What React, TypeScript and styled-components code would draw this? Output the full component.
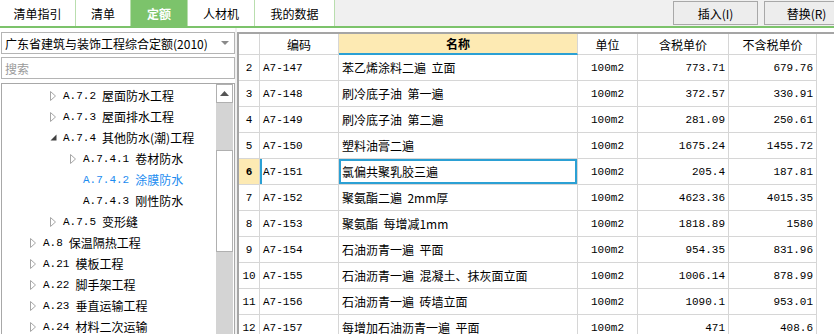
import React from "react";
import styled, { createGlobalStyle } from "styled-components";

type TreeNode = {
    level: number;
    code: string;
    name: string;
    state: "open" | "closed" | "leaf";
    selected?: boolean;
};

type Quota = {
    no: number;
    code: string;
    name: string;
    unit: string;
    taxed: string;
    untaxed: string;
};

const tabs = [
    { label: "清单指引", width: 76 },
    { label: "清单", width: 55 },
    { label: "定额", width: 57, active: true },
    { label: "人材机", width: 67 },
    { label: "我的数据", width: 80 },
];

const tree: TreeNode[] = [
    { level: 2, code: "A.7.2", name: "屋面防水工程", state: "closed" },
    { level: 2, code: "A.7.3", name: "屋面排水工程", state: "closed" },
    { level: 2, code: "A.7.4", name: "其他防水(潮)工程", state: "open" },
    { level: 3, code: "A.7.4.1", name: "卷材防水", state: "closed" },
    { level: 3, code: "A.7.4.2", name: "涂膜防水", state: "leaf", selected: true },
    { level: 3, code: "A.7.4.3", name: "刚性防水", state: "leaf" },
    { level: 2, code: "A.7.5", name: "变形缝", state: "closed" },
    { level: 1, code: "A.8", name: "保温隔热工程", state: "closed" },
    { level: 1, code: "A.21", name: "模板工程", state: "closed" },
    { level: 1, code: "A.22", name: "脚手架工程", state: "closed" },
    { level: 1, code: "A.23", name: "垂直运输工程", state: "closed" },
    { level: 1, code: "A.24", name: "材料二次运输", state: "closed" },
];

const quotas: Quota[] = [
    { no: 2, code: "A7-147", name: "苯乙烯涂料二遍  立面", unit: "100m2", taxed: "773.71", untaxed: "679.76" },
    { no: 3, code: "A7-148", name: "刷冷底子油  第一遍", unit: "100m2", taxed: "372.57", untaxed: "330.91" },
    { no: 4, code: "A7-149", name: "刷冷底子油  第二遍", unit: "100m2", taxed: "281.09", untaxed: "250.61" },
    { no: 5, code: "A7-150", name: "塑料油膏二遍", unit: "100m2", taxed: "1675.24", untaxed: "1455.72" },
    { no: 6, code: "A7-151", name: "氯偏共聚乳胶三遍", unit: "100m2", taxed: "205.4", untaxed: "187.81" },
    { no: 7, code: "A7-152", name: "聚氨酯二遍  2mm厚", unit: "100m2", taxed: "4623.36", untaxed: "4015.35" },
    { no: 8, code: "A7-153", name: "聚氨酯  每增减1mm", unit: "100m2", taxed: "1818.89", untaxed: "1580" },
    { no: 9, code: "A7-154", name: "石油沥青一遍  平面", unit: "100m2", taxed: "954.35", untaxed: "831.96" },
    { no: 10, code: "A7-155", name: "石油沥青一遍  混凝土、抹灰面立面", unit: "100m2", taxed: "1006.14", untaxed: "878.99" },
    { no: 11, code: "A7-156", name: "石油沥青一遍  砖墙立面", unit: "100m2", taxed: "1090.1", untaxed: "953.01" },
    { no: 12, code: "A7-157", name: "每增加石油沥青一遍  平面", unit: "100m2", taxed: "471", untaxed: "408.6" },
];

const SELECTED_ROW = 6;
const COLUMNS = "21px 79px 239px 60px 91px 88px";

const App: React.FC = () => {
    return (
        <Page>
            <GlobalStyle />
            <TabBar>
                {tabs.map((t) => (
                    <Tab key={t.label} $width={t.width} $active={t.active}>
                        {t.label}
                    </Tab>
                ))}
                <Actions>
                    <ActionButton>插入(I)</ActionButton>
                    <ActionButton>替换(R)</ActionButton>
                </Actions>
            </TabBar>

            <Main>
                <LeftPanel>
                    <Combo>
                        <span>广东省建筑与装饰工程综合定额(2010)</span>
                        <ComboArrow />
                    </Combo>
                    <Search>搜索</Search>
                    <TreeBox>
                        <TreeList>
                            {tree.map((n) => (
                                <TreeRow key={n.code} $level={n.level} $selected={n.selected}>
                                    <Toggle>
                                        {n.state === "closed" && (
                                            <svg width="6" height="10" viewBox="0 0 6 10">
                                                <path d="M0.5 0.5 L5.5 5 L0.5 9.5 Z" fill="#fff" stroke="#a6a6a6" />
                                            </svg>
                                        )}
                                        {n.state === "open" && (
                                            <svg width="7" height="7" viewBox="0 0 7 7">
                                                <path d="M6.5 0.5 L6.5 6.5 L0.5 6.5 Z" fill="#404040" />
                                            </svg>
                                        )}
                                    </Toggle>
                                    <Code>{n.code}</Code>
                                    <span>{n.name}</span>
                                </TreeRow>
                            ))}
                        </TreeList>
                        <ScrollBar>
                            <ScrollButton>
                                <svg width="9" height="5" viewBox="0 0 9 5">
                                    <path d="M0 5 L4.5 0 L9 5 Z" fill="#555" />
                                </svg>
                            </ScrollButton>
                            <ScrollThumb />
                        </ScrollBar>
                    </TreeBox>
                </LeftPanel>

                <Splitter />

                <GridArea>
                    <HeaderRow>
                        <HeadCell />
                        <HeadCell>编码</HeadCell>
                        <HeadCell $highlight>名称</HeadCell>
                        <HeadCell>单位</HeadCell>
                        <HeadCell>含税单价</HeadCell>
                        <HeadCell>不含税单价</HeadCell>
                    </HeaderRow>
                    {quotas.map((q) => {
                        const sel = q.no === SELECTED_ROW;
                        return (
                            <DataRow key={q.no}>
                                <NoCell $selected={sel}>{q.no}</NoCell>
                                <Cell $align="left" $marker={sel}>
                                    <Code>{q.code}</Code>
                                </Cell>
                                <NameCell $selected={sel}>{q.name}</NameCell>
                                <Cell $align="center">
                                    <Code>{q.unit}</Code>
                                </Cell>
                                <Cell $align="right">
                                    <Code>{q.taxed}</Code>
                                </Cell>
                                <Cell $align="right">
                                    <Code>{q.untaxed}</Code>
                                </Cell>
                            </DataRow>
                        );
                    })}
                </GridArea>
            </Main>
        </Page>
    );
};

const GlobalStyle = createGlobalStyle`
    html, body {
        margin: 0;
        padding: 0;
        background: #fff;
    }
    body {
        font-family: "Noto Sans CJK SC", "Liberation Sans", sans-serif;
        font-size: 12px;
        color: #000;
    }
    * {
        box-sizing: border-box;
    }
`;

const Page = styled.div`
    width: 834px;
    height: 334px;
    overflow: hidden;
    background: #fff;
    display: flex;
    flex-direction: column;
`;

const TabBar = styled.div`
    height: 28px;
    flex: none;
    display: flex;
    background: #f0f0f0;
    border-bottom: 2px solid #7cc36b;
    overflow: hidden;
`;

const Tab = styled.div<{ $width: number; $active?: boolean }>`
    width: ${(p) => p.$width}px;
    height: 26px;
    display: flex;
    align-items: center;
    justify-content: center;
    font-size: 12px;
    background: ${(p) => (p.$active ? "#7cc36b" : "#fff")};
    color: ${(p) => (p.$active ? "#fff" : "#000")};
    font-weight: ${(p) => (p.$active ? 700 : 400)};
    border-right: 1px solid #b9deae;
`;

const Actions = styled.div`
    margin-left: auto;
    display: flex;
    gap: 6px;
    padding-top: 1px;
    margin-right: -15px;
`;

const ActionButton = styled.div`
    width: 85px;
    height: 24px;
    display: flex;
    align-items: center;
    justify-content: center;
    font-size: 12px;
    background: #ededed;
    border: 1px solid #a8a8a8;
`;

const Main = styled.div`
    flex: 1;
    display: flex;
    min-height: 0;
`;

const LeftPanel = styled.div`
    width: 235px;
    flex: none;
    display: flex;
    flex-direction: column;
    gap: 3px;
    padding: 4px 0 0 1px;
`;

const Combo = styled.div`
    height: 22px;
    flex: none;
    display: flex;
    align-items: center;
    justify-content: space-between;
    padding: 0 5px 0 3px;
    border: 1px solid #b4b4b4;
    font-size: 12px;
    white-space: nowrap;
`;

const ComboArrow = styled.span`
    width: 0;
    height: 0;
    border-left: 4px solid transparent;
    border-right: 4px solid transparent;
    border-top: 4px solid #8a8a8a;
`;

const Search = styled.div`
    height: 22px;
    flex: none;
    display: flex;
    align-items: center;
    padding-left: 3px;
    border: 1px solid #b4b4b4;
    color: #9a9a9a;
    font-size: 12px;
`;

const TreeBox = styled.div`
    flex: 1;
    margin-top: 1px;
    display: flex;
    border: 1px solid #a8a8a8;
    border-bottom: none;
    min-height: 0;
    overflow: hidden;
`;

const TreeList = styled.div`
    flex: 1;
    padding-top: 1px;
`;

const TreeRow = styled.div<{ $level: number; $selected?: boolean }>`
    height: 21px;
    display: flex;
    align-items: center;
    white-space: nowrap;
    padding-left: ${(p) => 28 + (p.$level - 1) * 20}px;
    color: ${(p) => (p.$selected ? "#1c8cf0" : "#000")};
    font-size: 12px;
`;

const Toggle = styled.span`
    width: 13px;
    flex: none;
    display: flex;
    align-items: center;
`;

const Code = styled.span`
    font-family: "Liberation Mono", "DejaVu Sans Mono", monospace;
    font-size: 11px;
    white-space: pre;
    margin-right: 6px;

    &:last-child {
        margin-right: 0;
    }
`;

const ScrollBar = styled.div`
    width: 17px;
    flex: none;
    background: #d4d4d4;
    display: flex;
    flex-direction: column;
    margin-right: 1px;
`;

const ScrollButton = styled.div`
    height: 19px;
    display: flex;
    align-items: center;
    justify-content: center;
    background: #fff;
    border: 1px solid #b0b0b0;
`;

const ScrollThumb = styled.div`
    height: 102px;
    margin-top: 47px;
    background: #fff;
    border: 1px solid #b0b0b0;
`;

const Splitter = styled.div`
    width: 2px;
    flex: none;
    background: #f0f0f0;
`;

const GridArea = styled.div`
    flex: 1;
    margin-top: 4px;
    border-top: 2px solid #a5a5a5;
    border-left: 2px solid #a5a5a5;
    background: #fff;
`;

const HeaderRow = styled.div`
    display: grid;
    grid-template-columns: ${COLUMNS};
    height: 21px;
`;

const HeadCell = styled.div<{ $highlight?: boolean }>`
    display: flex;
    align-items: center;
    justify-content: center;
    font-size: 12px;
    border-right: 1px solid #d6d6d6;
    border-bottom: ${(p) => (p.$highlight ? "2px solid #2ba0d4" : "1px solid #d6d6d6")};
    background: ${(p) => (p.$highlight ? "#fdeab3" : "#fff")};
    font-weight: ${(p) => (p.$highlight ? 700 : 400)};
`;

const DataRow = styled.div`
    display: grid;
    grid-template-columns: ${COLUMNS};
    height: 26px;
`;

const Cell = styled.div<{ $align: "left" | "center" | "right"; $marker?: boolean }>`
    display: flex;
    align-items: center;
    justify-content: ${(p) =>
        p.$align === "left" ? "flex-start" : p.$align === "right" ? "flex-end" : "center"};
    padding: 0 3px;
    border-right: 1px solid #d6d6d6;
    border-bottom: 1px solid #d6d6d6;
    white-space: nowrap;
    overflow: hidden;
    box-shadow: ${(p) => (p.$marker ? "inset 2px 0 0 #2ba0d4" : "none")};
`;

const NoCell = styled.div<{ $selected?: boolean }>`
    display: flex;
    align-items: center;
    justify-content: center;
    font-family: "Liberation Mono", "DejaVu Sans Mono", monospace;
    font-size: 11px;
    border-right: 1px solid #d6d6d6;
    border-bottom: 1px solid #d6d6d6;
    background: ${(p) => (p.$selected ? "#fdeab3" : "#fff")};
    font-weight: ${(p) => (p.$selected ? 700 : 400)};
`;

const NameCell = styled.div<{ $selected?: boolean }>`
    display: flex;
    align-items: center;
    padding: 0 3px;
    font-size: 12px;
    white-space: pre;
    overflow: hidden;
    border-right: 1px solid #d6d6d6;
    border-bottom: 1px solid #d6d6d6;
    box-shadow: ${(p) => (p.$selected ? "inset 0 0 0 2px #2ba0d4" : "none")};
`;

export default App;
